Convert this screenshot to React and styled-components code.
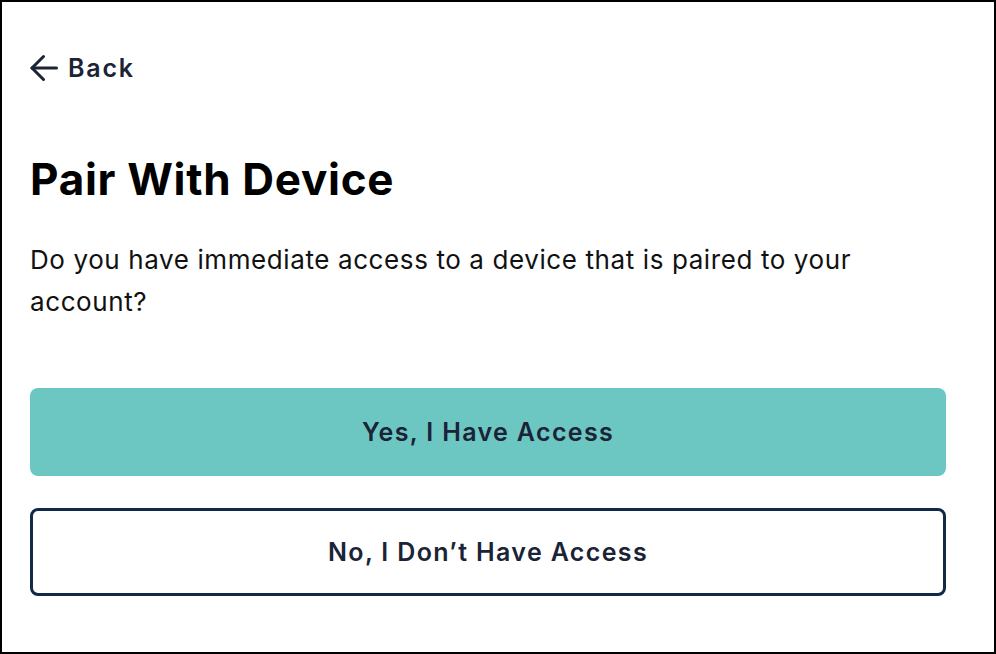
import React from "react";
import styled, { createGlobalStyle } from "styled-components";

const Global = createGlobalStyle`
  html, body { margin: 0; padding: 0; background: #fff; }
  body { font-family: Inter, "Noto Sans", sans-serif; -webkit-font-smoothing: antialiased; }
  * { box-sizing: border-box; }
`;

const Frame = styled.div`
  width: 996px;
  height: 654px;
  border: 2px solid #000;
  background: #fff;
  padding: 51px 48px 0 28px;
  display: flex;
  flex-direction: column;
`;

const BackLink = styled.a`
  display: flex;
  align-items: center;
  gap: 10px;
  color: #1b2337;
  font-size: 25px;
  font-weight: 600;
  letter-spacing: 1.8px;
  text-decoration: none;
  cursor: pointer;
  height: 30px;
`;

const Title = styled.h1`
  margin: 70px 0 0;
  font-size: 44px;
  font-weight: 700;
  line-height: 53px;
  color: #000;
  letter-spacing: 0.7px;
`;

const Body = styled.p`
  margin: 33px 0 0;
  max-width: 870px;
  font-size: 26px;
  line-height: 42px;
  font-weight: 400;
  letter-spacing: 0.6px;
  color: #111;
`;

const Actions = styled.div`
  display: flex;
  flex-direction: column;
  gap: 32px;
  margin-top: 65px;
`;

const Button = styled.button`
  height: 88px;
  width: 100%;
  border-radius: 8px;
  font-family: Inter, "Noto Sans", sans-serif;
  font-size: 25px;
  font-weight: 600;
  letter-spacing: 1.35px;
  color: #1b2337;
  cursor: pointer;
  background: ${(p) => (p.$primary ? "#6cc6c2" : "#fff")};
  border: ${(p) => (p.$primary ? "none" : "3px solid #12294a")};
`;

const ArrowIcon = () => (
  <svg width="28" height="28" viewBox="0 0 28 28" fill="none" stroke="#1b2337" strokeWidth="3" strokeLinecap="round" strokeLinejoin="round">
    <path d="M26.5 14H2" />
    <path d="M13.5 2.5L2 14L13.5 25.5" />
  </svg>
);

export default function App() {
  return (
    <>
      <Global />
      <Frame>
        <BackLink>
          <ArrowIcon />
          Back
        </BackLink>
        <Title>Pair With Device</Title>
        <Body>Do you have immediate access to a device that is paired to your account?</Body>
        <Actions>
          <Button $primary>Yes, I Have Access</Button>
          <Button>No, I Don’t Have Access</Button>
        </Actions>
      </Frame>
    </>
  );
}
